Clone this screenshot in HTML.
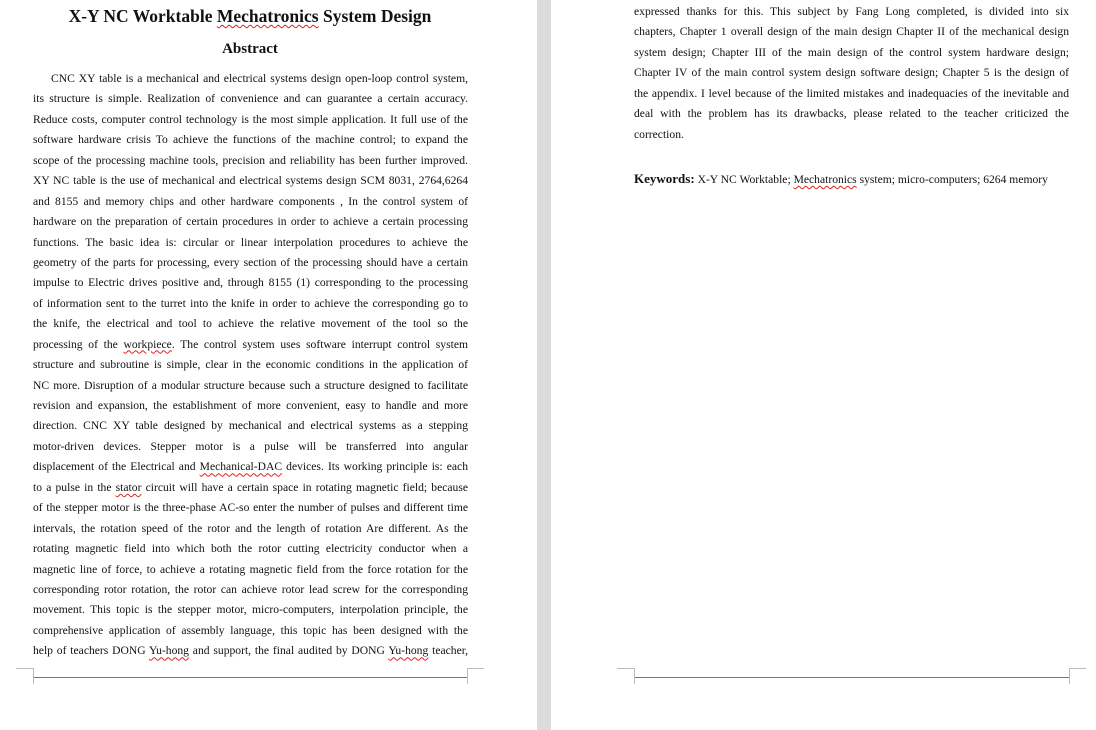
<!DOCTYPE html>
<html><head><meta charset="utf-8"><style>
body{margin:0;width:1096px;height:730px;background:#fff;position:relative;overflow:hidden;font-family:"Liberation Serif",serif;color:#111}
.strip{position:absolute;left:537px;top:0;width:14px;height:730px;background:#dcdcde}
.t{position:absolute;left:0;width:500px;text-align:center;font-weight:bold}
.blk{position:absolute;font-size:11.6px;line-height:20.45px}
.blk div{text-align:justify;text-align-last:justify;white-space:nowrap;height:20.45px}
.blk div.n{text-align-last:left}
.u{text-decoration:underline wavy #d22;text-decoration-thickness:1px;text-underline-offset:2px}
.h{position:absolute;height:1px;background:#777}
.v{position:absolute;width:1px;background:#bbb}
.hc{position:absolute;height:1px;background:#bbb}
</style></head><body>
<div class="strip"></div>
<div class="t" style="top:6px;font-size:17.5px">X-Y NC Worktable <span class="u">Mechatronics</span> System Design</div>
<div class="t" style="top:41px;font-size:15px">Abstract</div>
<div class="blk" style="left:33px;top:69px;width:435px">
<div style="padding-left:18px">CNC XY table is a mechanical and electrical systems design open-loop control system,</div>
<div>its structure is simple. Realization of convenience and can guarantee a certain accuracy.</div>
<div>Reduce costs, computer control technology is the most simple application. It full use of the</div>
<div>software hardware crisis To achieve the functions of the machine control; to expand the</div>
<div>scope of the processing machine tools, precision and reliability has been further improved.</div>
<div>XY NC table is the use of mechanical and electrical systems design SCM 8031, 2764,6264</div>
<div>and 8155 and memory chips and other hardware components , In the control system of</div>
<div>hardware on the preparation of certain procedures in order to achieve a certain processing</div>
<div>functions. The basic idea is: circular or linear interpolation procedures to achieve the</div>
<div>geometry of the parts for processing, every section of the processing should have a certain</div>
<div>impulse to Electric drives positive and, through 8155 (1) corresponding to the processing</div>
<div>of information sent to the turret into the knife in order to achieve the corresponding go to</div>
<div>the knife, the electrical and tool to achieve the relative movement of the tool so the</div>
<div>processing of the <span class="u">workpiece</span>. The control system uses software interrupt control system</div>
<div>structure and subroutine is simple, clear in the economic conditions in the application of</div>
<div>NC more. Disruption of a modular structure because such a structure designed to facilitate</div>
<div>revision and expansion, the establishment of more convenient, easy to handle and more</div>
<div>direction. CNC XY table designed by mechanical and electrical systems as a stepping</div>
<div>motor-driven devices. Stepper motor is a pulse will be transferred into angular</div>
<div>displacement of the Electrical and <span class="u">Mechanical-DAC</span> devices. Its working principle is: each</div>
<div>to a pulse in the <span class="u">stator</span> circuit will have a certain space in rotating magnetic field; because</div>
<div>of the stepper motor is the three-phase AC-so enter the number of pulses and different time</div>
<div>intervals, the rotation speed of the rotor and the length of rotation Are different. As the</div>
<div>rotating magnetic field into which both the rotor cutting electricity conductor when a</div>
<div>magnetic line of force, to achieve a rotating magnetic field from the force rotation for the</div>
<div>corresponding rotor rotation, the rotor can achieve rotor lead screw for the corresponding</div>
<div>movement. This topic is the stepper motor, micro-computers, interpolation principle, the</div>
<div>comprehensive application of assembly language, this topic has been designed with the</div>
<div>help of teachers DONG <span class="u">Yu-hong</span> and support, the final audited by DONG <span class="u">Yu-hong</span> teacher,</div>
</div>
<div class="blk" style="left:634px;top:2px;width:435px">
<div>expressed thanks for this. This subject by Fang Long completed, is divided into six</div>
<div>chapters, Chapter 1 overall design of the main design Chapter II of the mechanical design</div>
<div>system design; Chapter III of the main design of the control system hardware design;</div>
<div>Chapter IV of the main control system design software design; Chapter 5 is the design of</div>
<div>the appendix. I level because of the limited mistakes and inadequacies of the inevitable and</div>
<div>deal with the problem has its drawbacks, please related to the teacher criticized the</div>
<div class="n">correction.</div>
</div>
<div class="blk" style="left:634px;top:169px;width:435px">
<div class="n"><b style="font-size:13px">Keywords:</b> X-Y NC Worktable; <span class="u">Mechatronics</span> system; micro-computers; 6264 memory</div>
</div>
<div class="h" style="left:33px;top:677px;width:435px"></div>
<div class="hc" style="left:16px;top:668px;width:17px"></div>
<div class="v" style="left:33px;top:668px;height:16px"></div>
<div class="hc" style="left:467px;top:668px;width:17px"></div>
<div class="v" style="left:467px;top:668px;height:16px"></div>
<div class="h" style="left:634px;top:677px;width:435px"></div>
<div class="hc" style="left:617px;top:668px;width:17px"></div>
<div class="v" style="left:634px;top:668px;height:16px"></div>
<div class="hc" style="left:1069px;top:668px;width:17px"></div>
<div class="v" style="left:1069px;top:668px;height:16px"></div>
</body></html>
